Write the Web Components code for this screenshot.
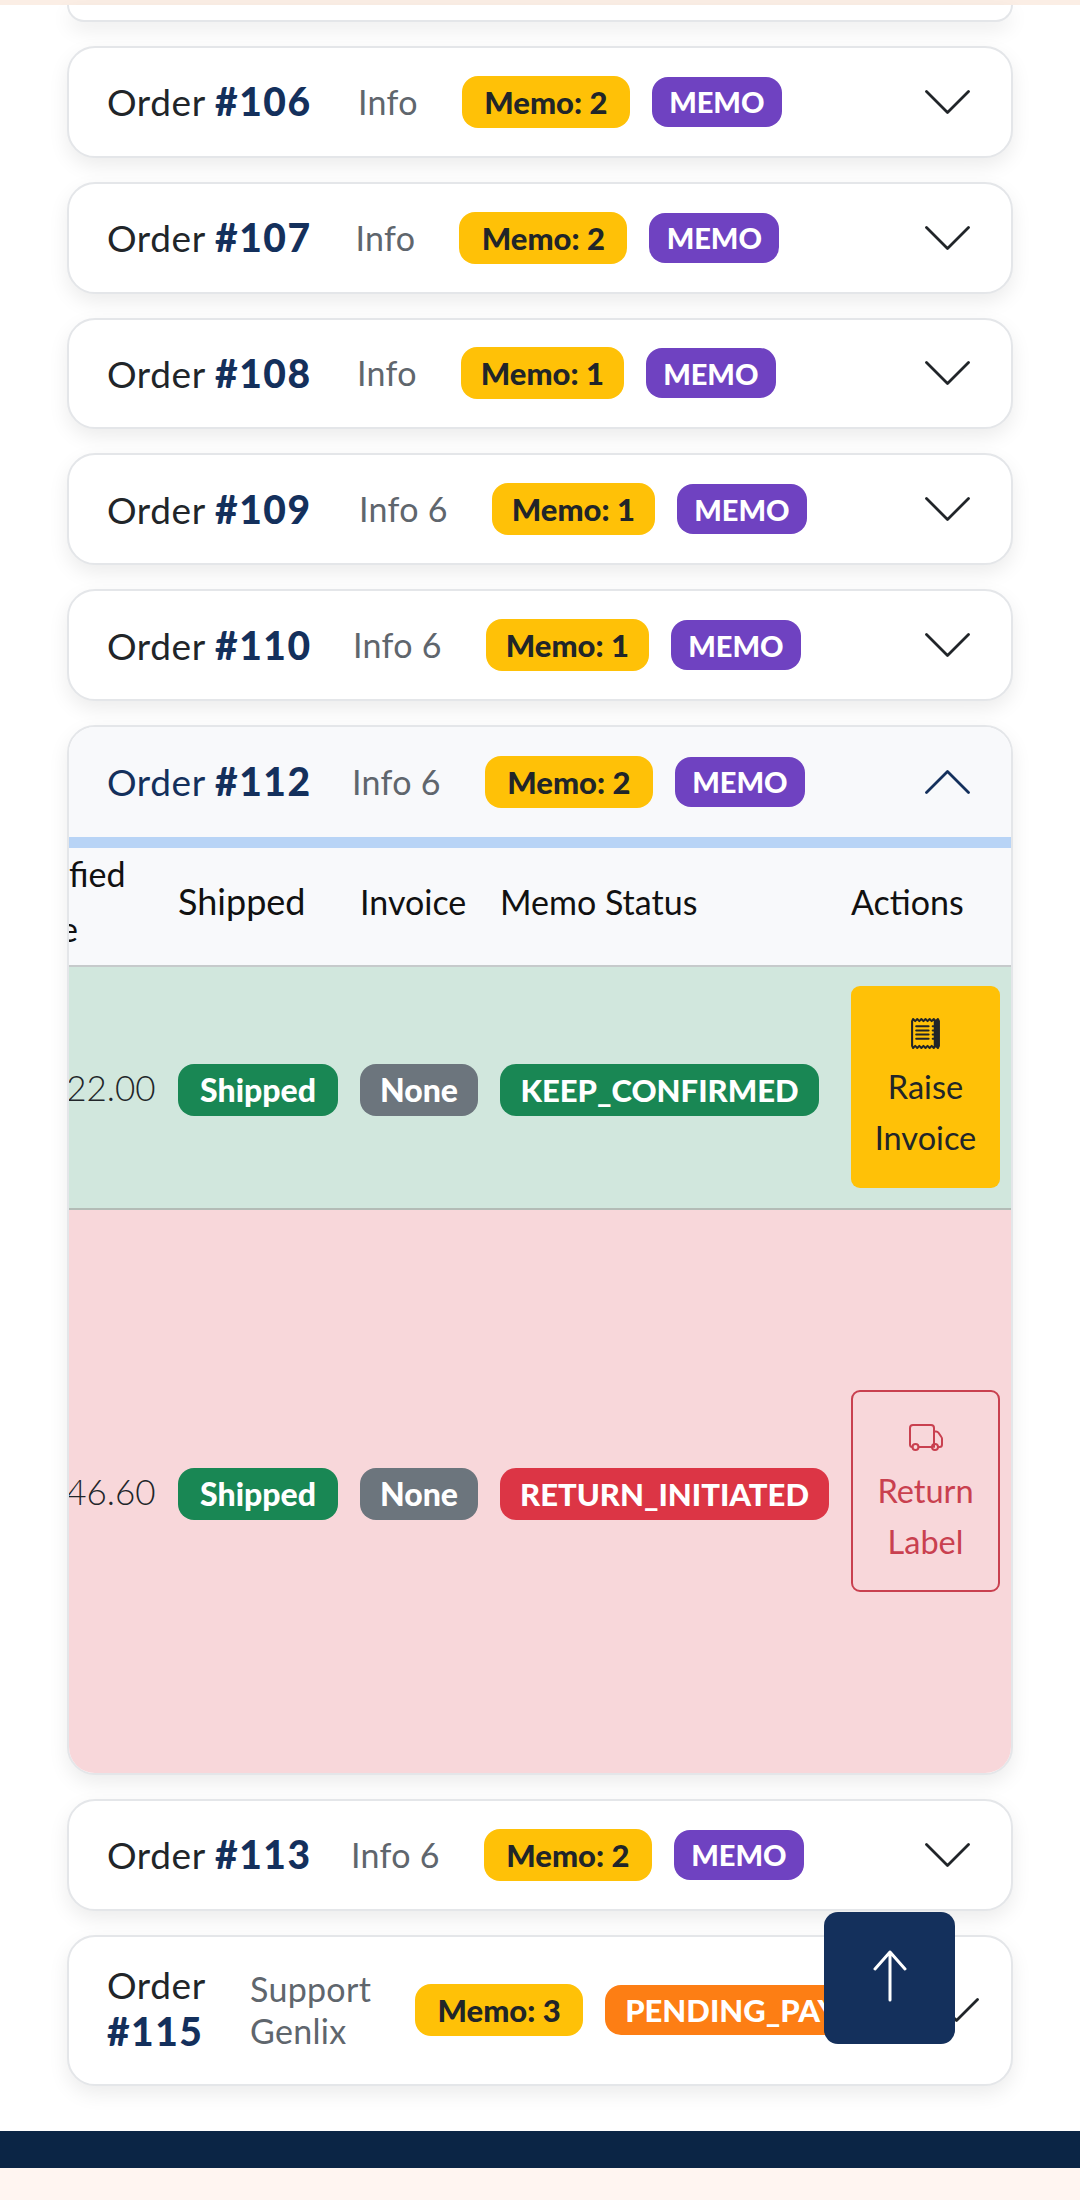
<!DOCTYPE html>
<html lang="en"><head><meta charset="utf-8"><title>Orders</title>
<style>
html,body{margin:0;padding:0;background:#fff}
body{font-family:"Lato","Liberation Sans",sans-serif;color:#212529}
</style></head><body>
<order-page>
  <order-card stub></order-card>
  <order-card num="#106" style="--tw:205px"><span slot="info">Info</span><status-pill tone="memo">Memo: 2</status-pill><status-pill tone="purple">MEMO</status-pill></order-card>
  <order-card num="#107" style="--tw:202.5px"><span slot="info">Info</span><status-pill tone="memo">Memo: 2</status-pill><status-pill tone="purple">MEMO</status-pill></order-card>
  <order-card num="#108" style="--tw:204px"><span slot="info">Info</span><status-pill tone="memo" style="width:163px">Memo: 1</status-pill><status-pill tone="purple">MEMO</status-pill></order-card>
  <order-card num="#109" style="--tw:206px"><span slot="info">Info 6</span><status-pill tone="memo" style="width:163px">Memo: 1</status-pill><status-pill tone="purple">MEMO</status-pill></order-card>
  <order-card num="#110" style="--tw:200px"><span slot="info">Info 6</span><status-pill tone="memo" style="width:163px">Memo: 1</status-pill><status-pill tone="purple">MEMO</status-pill></order-card>
  <order-card num="#112" open style="--tw:199px"><span slot="info">Info 6</span><status-pill tone="memo">Memo: 2</status-pill><status-pill tone="purple">MEMO</status-pill>
    <order-table slot="body">
      <table-line head h="119">
        <clip-text slot="a">fied<br><span style="margin-left:-9px">e</span></clip-text><span slot="b">Shipped</span><span slot="c">Invoice</span><span slot="d">Memo Status</span><span slot="e">Actions</span>
      </table-line>
      <table-line tone="ok" h="243">
        <span slot="a">22.00</span><status-pill slot="b" tone="green" style="width:160px;font-size:32px">Shipped</status-pill><status-pill slot="c" tone="gray" style="width:118px;font-size:32px">None</status-pill><status-pill slot="d" tone="green" style="width:319px">KEEP_CONFIRMED</status-pill><action-button slot="e" kind="raise">Raise Invoice</action-button>
      </table-line>
      <table-line tone="bad" h="563">
        <span slot="a">46.60</span><status-pill slot="b" tone="green" style="width:160px;font-size:32px">Shipped</status-pill><status-pill slot="c" tone="gray" style="width:118px;font-size:32px">None</status-pill><status-pill slot="d" tone="red" style="width:329px">RETURN_INITIATED</status-pill><action-button slot="e" kind="return">Return Label</action-button>
      </table-line>
    </order-table>
  </order-card>
  <order-card num="#113" style="--tw:198px"><span slot="info">Info 6</span><status-pill tone="memo">Memo: 2</status-pill><status-pill tone="purple">MEMO</status-pill></order-card>
  <order-card num="#115" wrap style="--tw:97px"><span slot="info">Support<br>Genlix</span><status-pill tone="memo">Memo: 3</status-pill><status-pill tone="orange" style="width:329px;justify-content:flex-start">PENDING_PAYMENT</status-pill></order-card>
</order-page>
<script>
const def=(name,html,extra={})=>{
  const t=document.createElement('template');t.innerHTML=html;
  class C extends HTMLElement{
    constructor(){super();this.attachShadow({mode:'open'}).appendChild(t.content.cloneNode(true));}
    connectedCallback(){extra.init&&extra.init(this)}
  }
  customElements.define(name,C);
};
def('order-page',`<style>
:host{display:block;position:relative;height:2200px;overflow:hidden;background:#fff}
.top{height:5px;background:#fbeee5}
main{padding:0 67px;display:flex;flex-direction:column;gap:24px;height:2126px;box-sizing:border-box}
footer{height:37px;background:#0b2545}
.rest{height:32px;background:#fff5f1}
.up{position:absolute;left:824px;top:1912px;width:131px;height:132px;border-radius:14px;background:#14305c;display:flex;align-items:center;justify-content:center}
.up svg{margin-bottom:4px}
</style><div class="top"></div><main><slot></slot></main><footer></footer><div class="rest"></div>
<div class="up" role="button" aria-label="Back to top"><svg width="34" height="52" viewBox="0 0 34 52" fill="none" stroke="#fff" stroke-width="3" stroke-linecap="round" stroke-linejoin="round"><path d="M17 50V2M2 19 17 2l15 17"/></svg></div>`);

def('order-card',`<style>
:host{display:block;box-sizing:border-box;width:946px;border:2px solid #e4e6e9;border-radius:28px;background:#fff;box-shadow:0 8px 20px rgba(0,0,0,.08);overflow:hidden;flex:none}
:host([stub]){height:17px;border-top:0;border-radius:0 0 28px 28px}
:host([stub]) header{display:none}
header{display:flex;align-items:center;min-height:107.8px;box-sizing:border-box;padding:0 41px 0 38px}
:host([open]) header{min-height:110px;background:#f8f9fb;color:#14305c}
:host([wrap]) header{padding-top:28.5px;padding-bottom:28.500px}
.t{flex:none;width:var(--tw,auto);white-space:nowrap;font-size:37px;letter-spacing:.6px;line-height:46px}
.t b{font-weight:900;font-size:39px;color:#14305c;letter-spacing:1.5px}
:host([wrap]) .t{white-space:normal;margin-top:-3px}
.i{margin-left:46px;color:#5f666d;white-space:nowrap;line-height:42px;font-size:34px;letter-spacing:.3px;flex:none}
.p{display:flex;align-items:center;gap:22px;margin-left:44px;flex:none}
.c{margin-left:auto;flex:none;display:block;stroke:#212529}
:host([open]) .c{stroke:#14305c}
.line{height:11px;background:#b8d4f6}
:host(:not([open])) .body,:host(:not([open])) .line{display:none}
</style>
<header><span class="t">Order <b></b></span><span class="i"><slot name="info"></slot></span><span class="p"><slot></slot></span>
<svg class="c" width="45" height="24" viewBox="0 0 45 24" fill="none" stroke-width="2.8" stroke-linecap="round" stroke-linejoin="round"><path class="d" d="M1.500 1.500 22.500 22.500 43.500 1.500"/></svg></header>
<div class="line"></div><div class="body"><slot name="body"></slot></div>`,{init(el){
  el.shadowRoot.querySelector('b').textContent=el.getAttribute('num')||'';
  if(el.hasAttribute('open'))el.shadowRoot.querySelector('.d').setAttribute('d','M1.500 22.500 22.500 1.500 43.500 22.500');
}});

def('status-pill',`<style>
:host{display:inline-flex;align-items:center;justify-content:center;box-sizing:border-box;height:50px;padding:0 20px;border-radius:16px;font-weight:900;font-size:31px;color:#fff;white-space:nowrap;flex:none}
:host([tone=memo]){height:52px;width:168px;padding:0;background:#ffc107;color:#212529}
:host([tone=purple]){width:130px;padding:0;font-size:29px;background:#6f42c1}
:host([tone=green]){height:52px;padding:0;background:#198754}
:host([tone=gray]){height:52px;padding:0;background:#6c757d}
:host([tone=red]){height:52px;padding:0;background:#dc3545}
:host([tone=orange]){background:#fd7e14}
</style><slot></slot>`);

def('order-table',`<style>:host{display:block}</style><slot></slot>`);

def('table-line',`<style>
:host{display:grid;grid-template-columns:98px 182px 140px 351px 171px;align-items:center;background:#fff;font-size:34px;box-sizing:border-box}
:host([head]){background:#f8f9fb;color:#111;border-bottom:2px solid #c6cacb;padding-bottom:10px}
:host([tone=ok]){background:#d1e7dd;border-bottom:2px solid #b3bcb6}
:host([tone=bad]){background:#f8d7da}
.a{display:flex;justify-content:flex-end;overflow:hidden;white-space:nowrap;font-weight:300;font-size:35px;color:#212529;padding-right:11.5px;box-sizing:border-box}
:host([head]) .a{justify-content:flex-start;padding:0;font-size:34px;font-weight:400}
.b,.c,.d,.e{box-sizing:border-box;padding-left:11px;white-space:nowrap}
.e{padding-right:11px}
:host([head]) .b{font-size:36px}
::slotted(status-pill){margin-top:5px}
</style><div class="a"><slot name="a"></slot></div><div class="b"><slot name="b"></slot></div><div class="c"><slot name="c"></slot></div><div class="d"><slot name="d"></slot></div><div class="e"><slot name="e"></slot></div>`,{init(el){el.style.height=el.getAttribute('h')+'px'}});

def('clip-text',`<style>:host{display:block;text-align:left;line-height:55px;color:#111}</style><slot></slot>`);

const receipt=`<svg width="33" height="33" viewBox="0 0 16 16" fill="currentColor"><path d="M1.92.506a.5.5 0 0 1 .434.14L3 1.293l.646-.647a.5.5 0 0 1 .708 0L5 1.293l.646-.647a.5.5 0 0 1 .708 0L7 1.293l.646-.647a.5.5 0 0 1 .708 0L9 1.293l.646-.647a.5.5 0 0 1 .708 0l.646.647.646-.647a.5.5 0 0 1 .708 0l.646.647.646-.647a.5.5 0 0 1 .801.13l.5 1A.5.5 0 0 1 15 2v12a.5.5 0 0 1-.053.224l-.5 1a.5.5 0 0 1-.8.13L13 14.707l-.646.647a.5.5 0 0 1-.708 0L11 14.707l-.646.647a.5.5 0 0 1-.708 0L9 14.707l-.646.647a.5.5 0 0 1-.708 0L7 14.707l-.646.647a.5.5 0 0 1-.708 0L5 14.707l-.646.647a.5.5 0 0 1-.708 0L3 14.707l-.646.647a.5.5 0 0 1-.801-.13l-.5-1A.5.5 0 0 1 1 14V2a.5.5 0 0 1 .053-.224l.5-1a.5.5 0 0 1 .367-.27m.217 1.338L2 2.118v11.764l.137.274.51-.51a.5.5 0 0 1 .707 0l.646.647.646-.646a.5.5 0 0 1 .708 0l.646.646.646-.646a.5.5 0 0 1 .708 0l.646.646.646-.646a.5.5 0 0 1 .708 0l.646.646.646-.646a.5.5 0 0 1 .708 0l.509.509.137-.274V2.118l-.137-.274-.51.51a.5.5 0 0 1-.707 0L12 1.707l-.646.647a.5.5 0 0 1-.708 0L10 1.707l-.646.647a.5.5 0 0 1-.708 0L8 1.707l-.646.647a.5.5 0 0 1-.708 0L6 1.707l-.646.647a.5.5 0 0 1-.708 0L4 1.707l-.646.647a.5.5 0 0 1-.708 0z"/><path d="M3 4.500a.5.5 0 0 1 .5-.5h6a.5.5 0 1 1 0 1h-6a.5.5 0 0 1-.5-.5m0 2a.5.5 0 0 1 .5-.5h6a.5.5 0 1 1 0 1h-6a.5.5 0 0 1-.5-.5m0 2a.5.5 0 0 1 .5-.5h6a.5.5 0 1 1 0 1h-6a.5.5 0 0 1-.5-.5m0 2a.5.5 0 0 1 .5-.5h6a.5.5 0 0 1 0 1h-6a.5.5 0 0 1-.5-.5m8-6a.5.5 0 0 1 .5-.5h1a.5.5 0 0 1 0 1h-1a.5.5 0 0 1-.5-.5m0 2a.5.5 0 0 1 .5-.5h1a.5.5 0 0 1 0 1h-1a.5.5 0 0 1-.5-.5m0 2a.5.5 0 0 1 .5-.5h1a.5.5 0 0 1 0 1h-1a.5.5 0 0 1-.5-.5m0 2a.5.5 0 0 1 .5-.5h1a.5.5 0 0 1 0 1h-1a.5.5 0 0 1-.5-.5"/></svg>`;
const truck=`<svg width="34" height="27" viewBox="0 0 34 27" fill="none" stroke="currentColor" stroke-width="2" stroke-linecap="round" stroke-linejoin="round"><path d="M3.500 23A2.500 2.500 0 0 1 1 20.500V4A3 3 0 0 1 4 1H22A3 3 0 0 1 25 4V23M9.500 23H23"/><path d="M25 7.500H27A3 3 0 0 1 29.500 8.800L32.400 13A3 3 0 0 1 33 14.800V20.500A2.500 2.500 0 0 1 30.500 23H29"/><circle cx="6.500" cy="23" r="3"/><circle cx="26" cy="23" r="3"/></svg>`;
def('action-button',`<style>
:host{display:flex;flex-direction:column;align-items:center;box-sizing:border-box;width:149px;height:202px;padding:29px 10px 0;border-radius:9px;font-size:32.500px;line-height:51px;text-align:center;white-space:normal}
:host([kind=raise]){background:#ffc107;color:#212529}
:host([kind=return]){border:2px solid #c9404f;color:#c9404f;padding-top:27px}
.ic{height:37px;display:flex;align-items:center;justify-content:center;margin-bottom:9px}
</style><span class="ic"></span><slot></slot>`,{init(el){el.shadowRoot.querySelector('.ic').innerHTML=el.getAttribute('kind')==='raise'?receipt:truck}});
</script>
</body></html>
